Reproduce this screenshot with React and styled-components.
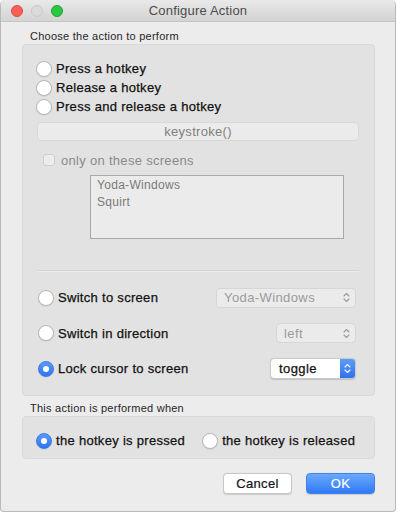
import React from "react";
import styled, { createGlobalStyle } from "styled-components";

const GlobalStyle = createGlobalStyle`
  html, body {
    margin: 0;
    padding: 0;
    background: #ffffff;
  }
  body {
    font-family: "Liberation Sans", Arial, sans-serif;
    -webkit-font-smoothing: antialiased;
  }
`;

const Chevrons = ({ color }) => (
  <svg width="7" height="11" viewBox="0 0 7 11">
    <path d="M1 4 L3.5 1.5 L6 4" fill="none" stroke={color} strokeWidth="1.1" strokeLinecap="round" strokeLinejoin="round" />
    <path d="M1 7 L3.5 9.5 L6 7" fill="none" stroke={color} strokeWidth="1.1" strokeLinecap="round" strokeLinejoin="round" />
  </svg>
);

const Radio = ({ checked }) => (
  <RadioCircle $checked={checked}>{checked ? <RadioDot /> : null}</RadioCircle>
);

const RadioRow = ({ checked, children }) => (
  <OptionRow>
    <Radio checked={checked} />
    <OptionLabel>{children}</OptionLabel>
  </OptionRow>
);

const Popup = ({ value, width, enabled }) => (
  <PopupBox $width={width} $enabled={enabled}>
    <PopupValue $enabled={enabled}>{value}</PopupValue>
    <PopupArrows $enabled={enabled}>
      <Chevrons color={enabled ? "#ffffff" : "#9a9a9a"} />
    </PopupArrows>
  </PopupBox>
);

const App = () => {
  return (
    <>
      <GlobalStyle />
      <Window>
        <TitleBar>
          <Lights>
            <Light $color="#fc5f57" $border="#de4a42" />
            <Light $color="#dadada" $border="#c8c8c8" />
            <Light $color="#2ac840" $border="#1fa32f" />
          </Lights>
          <Title>Configure Action</Title>
          <span />
        </TitleBar>

        <Content>
          <GroupLabel>Choose the action to perform</GroupLabel>
          <GroupBox $top={14} $bottom={16}>
            <HotkeySection>
              <RadioRow>Press a hotkey</RadioRow>
              <RadioRow>Release a hotkey</RadioRow>
              <RadioRow>Press and release a hotkey</RadioRow>
              <KeystrokeField>keystroke()</KeystrokeField>
              <CheckRow>
                <CheckBox />
                <CheckLabel>only on these screens</CheckLabel>
              </CheckRow>
              <ScreenList>
                <ListItem>Yoda-Windows</ListItem>
                <ListItem>Squirt</ListItem>
              </ScreenList>
              <Separator />
            </HotkeySection>

            <ScreenSection>
              <ScreenRow>
                <RadioRow>Switch to screen</RadioRow>
                <Popup value="Yoda-Windows" width={140} />
              </ScreenRow>
              <ScreenRow>
                <RadioRow>Switch in direction</RadioRow>
                <Popup value="left" width={80} />
              </ScreenRow>
              <ScreenRow>
                <RadioRow checked>Lock cursor to screen</RadioRow>
                <Popup value="toggle" width={86} enabled />
              </ScreenRow>
            </ScreenSection>
          </GroupBox>

          <GroupLabel $gap={6}>This action is performed when</GroupLabel>
          <GroupBox $top={14} $bottom={8}>
            <WhenRow>
              <RadioRow checked>the hotkey is pressed</RadioRow>
              <RadioRow>the hotkey is released</RadioRow>
            </WhenRow>
          </GroupBox>

          <ButtonBar>
            <Button>Cancel</Button>
            <Button $primary>OK</Button>
          </ButtonBar>
        </Content>
      </Window>
    </>
  );
};

export default App;

const Window = styled.div`
  width: 396px;
  height: 512px;
  background: #ececec;
  border: 1px solid #b9b9b9;
  border-top: none;
  border-radius: 5px 5px 4px 4px;
  box-sizing: border-box;
  display: flex;
  flex-direction: column;
  overflow: hidden;
`;

const TitleBar = styled.div`
  height: 22px;
  box-sizing: border-box;
  background: linear-gradient(#e9e9e9, #d3d3d3);
  border-bottom: 1px solid #c6c6c6;
  display: grid;
  grid-template-columns: 1fr auto 1fr;
  align-items: center;
`;

const Lights = styled.div`
  display: flex;
  gap: 8px;
  padding-left: 10px;
`;

const Light = styled.span`
  width: 12px;
  height: 12px;
  border-radius: 50%;
  box-sizing: border-box;
  background: ${(p) => p.$color};
  border: 0.5px solid ${(p) => p.$border};
`;

const Title = styled.div`
  font-size: 13px;
  color: #4c4c4c;
  letter-spacing: 0.2px;
`;

const Content = styled.div`
  display: flex;
  flex-direction: column;
  padding: 8px 20px 0 21px;
`;

const GroupLabel = styled.div`
  font-size: 11px;
  line-height: 13px;
  color: #262626;
  padding-left: 8px;
  margin: ${(p) => p.$gap || 0}px 0 1px;
  letter-spacing: 0.25px;
`;

const GroupBox = styled.div`
  background: #e2e2e2;
  border: 1px solid #dadada;
  border-radius: 4px;
  box-sizing: border-box;
  padding: ${(p) => p.$top}px 0 ${(p) => p.$bottom}px;
  display: flex;
  flex-direction: column;
`;

const HotkeySection = styled.div`
  display: flex;
  flex-direction: column;
  padding: 0 15px 0 13px;
`;

const OptionRow = styled.div`
  display: flex;
  align-items: center;
  height: 19px;
  gap: 4px;
`;

const RadioCircle = styled.span`
  width: 16px;
  height: 16px;
  border-radius: 50%;
  box-sizing: border-box;
  display: flex;
  align-items: center;
  justify-content: center;
  flex-shrink: 0;
  background: ${(p) =>
    p.$checked ? "linear-gradient(#5a9bf8, #2f74f0)" : "#ffffff"};
  border: 1px solid ${(p) => (p.$checked ? "#3b7ae8" : "#b8b8b8")};
  box-shadow: 0 0.5px 1px rgba(0, 0, 0, 0.12);
`;

const RadioDot = styled.span`
  width: 6px;
  height: 6px;
  border-radius: 50%;
  background: #ffffff;
`;

const OptionLabel = styled.span`
  font-size: 13px;
  color: #111111;
  letter-spacing: 0.3px;
  -webkit-text-stroke: 0.25px #111111;
  white-space: nowrap;
`;

const KeystrokeField = styled.div`
  margin: 6px 0 0 1px;
  height: 19px;
  box-sizing: border-box;
  background: #ebebeb;
  border: 1px solid #d8d8d8;
  border-radius: 4px;
  display: flex;
  align-items: center;
  justify-content: center;
  font-size: 13px;
  color: #7f7f7f;
  letter-spacing: 0.3px;
`;

const CheckRow = styled.div`
  display: flex;
  align-items: center;
  gap: 6px;
  margin: 12px 0 0 7px;
  height: 14px;
`;

const CheckBox = styled.span`
  width: 12px;
  height: 12px;
  box-sizing: border-box;
  background: #ececec;
  border: 1px solid #cfcfcf;
  border-radius: 3px;
`;

const CheckLabel = styled.span`
  font-size: 13px;
  color: #8a8a8a;
  letter-spacing: 0.3px;
`;

const ScreenList = styled.div`
  margin: 8px 15px 0 54px;
  height: 64px;
  box-sizing: border-box;
  background: #ebebeb;
  border: 1px solid #a9a9a9;
  padding: 1px 6px;
  display: flex;
  flex-direction: column;
`;

const ListItem = styled.div`
  font-size: 12px;
  line-height: 17px;
  color: #7a7a7a;
  letter-spacing: 0.3px;
`;

const Separator = styled.div`
  margin: 31px 0 0 2px;
  height: 1px;
  background: #d2d2d2;
  border-bottom: 1px solid #ececec;
`;

const ScreenSection = styled.div`
  display: flex;
  flex-direction: column;
  gap: 14.5px;
  padding: 15px 18px 0 15px;
`;

const ScreenRow = styled.div`
  display: flex;
  align-items: center;
  justify-content: space-between;
  height: 21px;
`;

const PopupBox = styled.div`
  width: ${(p) => p.$width}px;
  height: ${(p) => (p.$enabled ? 21 : 20)}px;
  box-sizing: border-box;
  display: flex;
  align-items: stretch;
  border-radius: 4px;
  overflow: hidden;
  background: ${(p) => (p.$enabled ? "#ffffff" : "#ebebeb")};
  border: 1px solid ${(p) => (p.$enabled ? "#c9c9c9" : "#d6d6d6")};
  box-shadow: ${(p) => (p.$enabled ? "0 0.5px 1px rgba(0,0,0,0.15)" : "none")};
`;

const PopupValue = styled.span`
  flex: 1;
  display: flex;
  align-items: center;
  padding-left: ${(p) => (p.$enabled ? 8 : 7)}px;
  font-size: 13px;
  color: ${(p) => (p.$enabled ? "#111111" : "#9b9b9b")};
  letter-spacing: 0.4px;
  -webkit-text-stroke: ${(p) => (p.$enabled ? "0.25px #111111" : "0")};
`;

const PopupArrows = styled.span`
  width: ${(p) => (p.$enabled ? 15 : 18)}px;
  display: flex;
  align-items: center;
  justify-content: center;
  background: ${(p) =>
    p.$enabled ? "linear-gradient(#5d9cf8, #2e72ef)" : "transparent"};
`;

const WhenRow = styled.div`
  display: flex;
  align-items: center;
  gap: 17px;
  padding-left: 13px;
`;

const ButtonBar = styled.div`
  display: flex;
  justify-content: flex-end;
  gap: 14px;
  margin-top: 14px;
`;

const Button = styled.div`
  width: 69px;
  height: 21px;
  box-sizing: border-box;
  border-radius: 4px;
  display: flex;
  align-items: center;
  justify-content: center;
  font-size: 13px;
  letter-spacing: 0.3px;
  color: ${(p) => (p.$primary ? "#ffffff" : "#111111")};
  -webkit-text-stroke: 0.2px ${(p) => (p.$primary ? "#ffffff" : "#111111")};
  background: ${(p) =>
    p.$primary ? "linear-gradient(#6aa9fa, #2f7af6)" : "#ffffff"};
  border: 1px solid ${(p) => (p.$primary ? "#3f82f3" : "#c8c8c8")};
  box-shadow: 0 0.5px 1px rgba(0, 0, 0, 0.15);
`;
